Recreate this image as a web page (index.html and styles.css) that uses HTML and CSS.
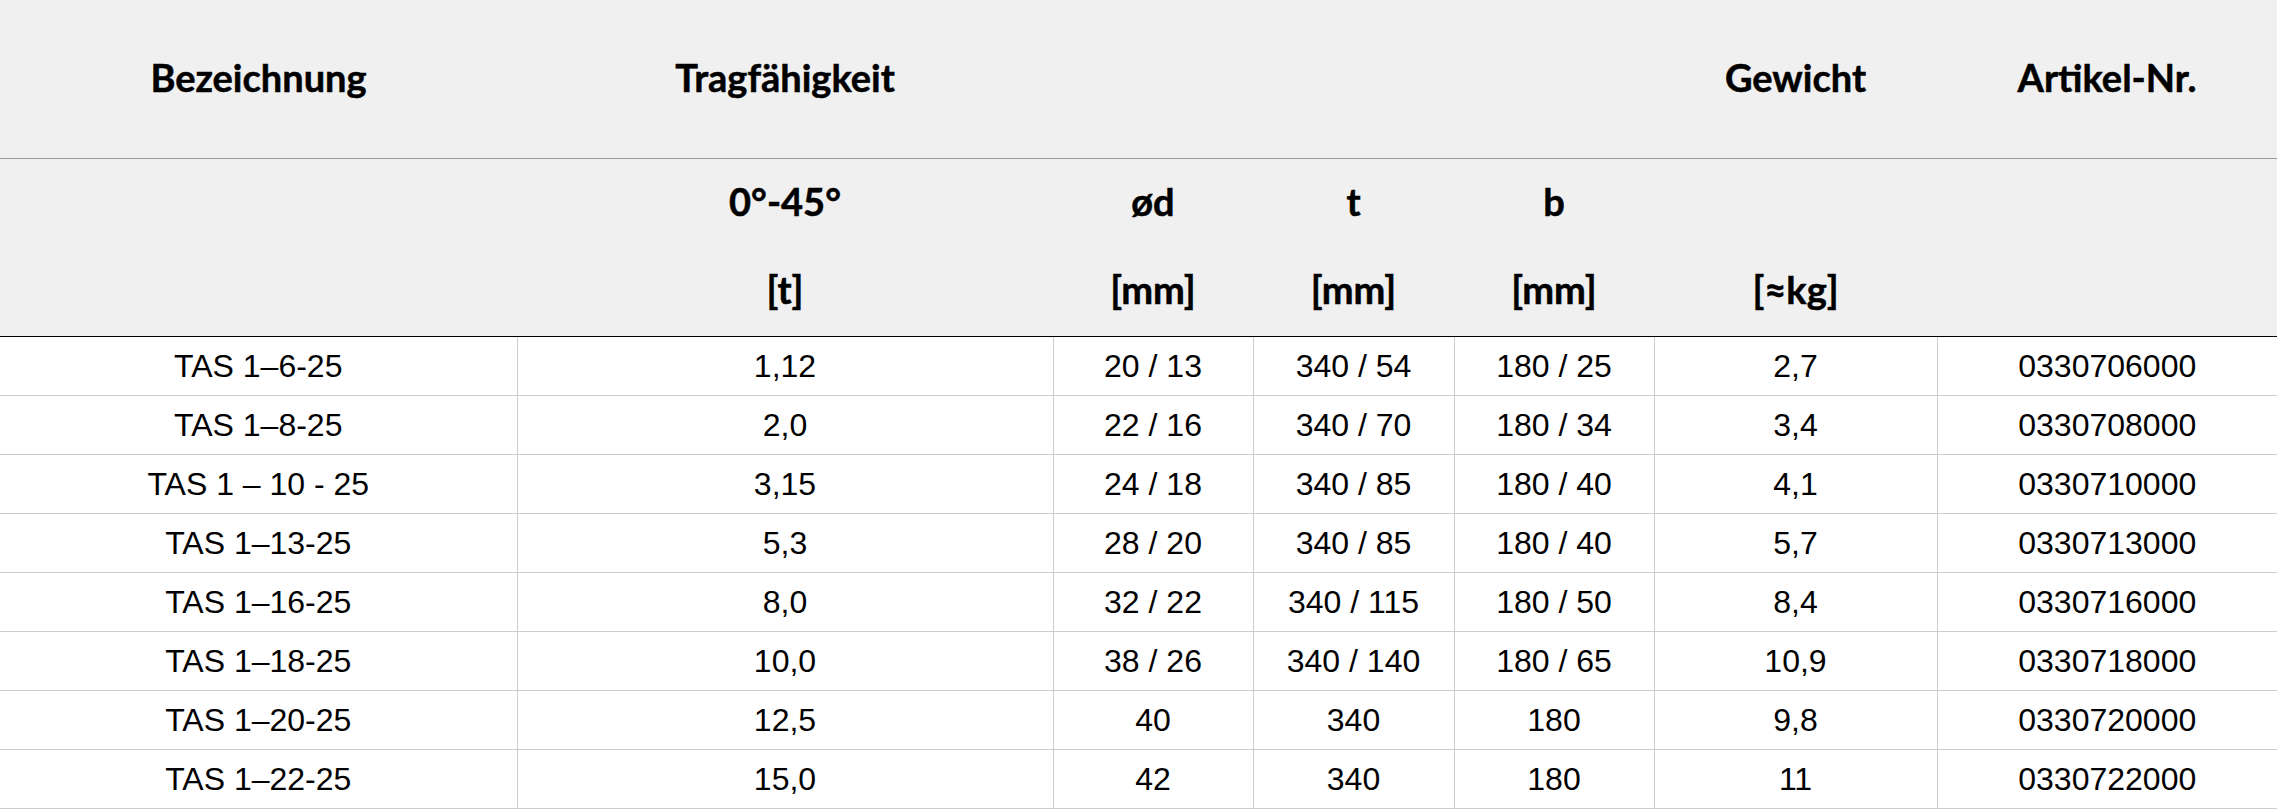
FILE: index.html
```html
<!DOCTYPE html>
<html lang="de">
<head>
<meta charset="utf-8">
<title>TAS Tragfähigkeit</title>
<link rel="stylesheet" href="styles.css">
</head>
<body>
<table class="spec">
  <colgroup>
    <col class="c-name">
    <col class="c-load">
    <col class="c-d">
    <col class="c-t">
    <col class="c-b">
    <col class="c-kg">
    <col class="c-art">
  </colgroup>
  <thead>
    <tr class="h-main">
      <th>Bezeichnung</th>
      <th>Tragfähigkeit</th>
      <th></th>
      <th></th>
      <th></th>
      <th>Gewicht</th>
      <th>Artikel-Nr.</th>
    </tr>
    <tr class="h-sym">
      <th></th>
      <th>0°-45°</th>
      <th>ød</th>
      <th>t</th>
      <th>b</th>
      <th></th>
      <th></th>
    </tr>
    <tr class="h-unit">
      <th></th>
      <th>[t]</th>
      <th>[mm]</th>
      <th>[mm]</th>
      <th>[mm]</th>
      <th>[≈kg]</th>
      <th></th>
    </tr>
  </thead>
  <tbody>
    <tr><td>TAS 1–6-25</td><td>1,12</td><td>20 / 13</td><td>340 / 54</td><td>180 / 25</td><td>2,7</td><td>0330706000</td></tr>
    <tr><td>TAS 1–8-25</td><td>2,0</td><td>22 / 16</td><td>340 / 70</td><td>180 / 34</td><td>3,4</td><td>0330708000</td></tr>
    <tr><td>TAS 1 – 10 - 25</td><td>3,15</td><td>24 / 18</td><td>340 / 85</td><td>180 / 40</td><td>4,1</td><td>0330710000</td></tr>
    <tr><td>TAS 1–13-25</td><td>5,3</td><td>28 / 20</td><td>340 / 85</td><td>180 / 40</td><td>5,7</td><td>0330713000</td></tr>
    <tr><td>TAS 1–16-25</td><td>8,0</td><td>32 / 22</td><td>340 / 115</td><td>180 / 50</td><td>8,4</td><td>0330716000</td></tr>
    <tr><td>TAS 1–18-25</td><td>10,0</td><td>38 / 26</td><td>340 / 140</td><td>180 / 65</td><td>10,9</td><td>0330718000</td></tr>
    <tr><td>TAS 1–20-25</td><td>12,5</td><td>40</td><td>340</td><td>180</td><td>9,8</td><td>0330720000</td></tr>
    <tr><td>TAS 1–22-25</td><td>15,0</td><td>42</td><td>340</td><td>180</td><td>11</td><td>0330722000</td></tr>
  </tbody>
</table>
</body>
</html>
```

FILE: styles.css
```css
html, body {
  margin: 0;
  padding: 0;
  background: #ffffff;
}

.spec {
  width: 2277px;
  table-layout: fixed;
  border-collapse: collapse;
  border-spacing: 0;
  color: #000;
}

.c-name { width: 517px; }
.c-load { width: 536px; }
.c-d { width: 200px; }
.c-t { width: 201px; }
.c-b { width: 200px; }
.c-kg { width: 283px; }
.c-art { width: 340px; }

.spec th {
  background: #f0f0f0;
  font-family: "Lato", "Open Sans", sans-serif;
  font-weight: 700;
  font-size: 38px;
  line-height: 1;
  padding: 0 0 4px 0;
  text-align: center;
  vertical-align: middle;
  -webkit-text-stroke: 0.5px #000;
}

.h-main th {
  height: 154px;
  border-bottom: 1px solid #999999;
}

.h-sym th {
  height: 83px;
  padding-bottom: 6px;
}

.h-unit th {
  height: 82px;
  padding-bottom: 6px;
  border-bottom: 1px solid #000000;
}

.spec td {
  font-family: "Liberation Sans", Arial, sans-serif;
  font-size: 32px;
  line-height: 1;
  height: 58px;
  padding: 0;
  text-align: center;
  vertical-align: middle;
  border-bottom: 1px solid #cccccc;
  border-left: 1px solid #cccccc;
}

.spec td:first-child {
  border-left: none;
}
```
